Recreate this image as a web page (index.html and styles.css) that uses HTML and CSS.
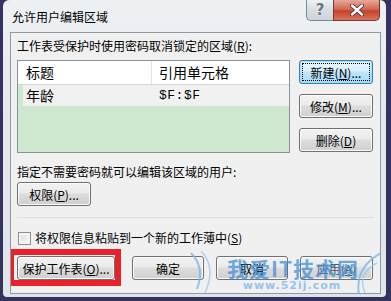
FILE: index.html
```html
<!DOCTYPE html>
<html lang="zh-CN">
<head>
  <meta charset="UTF-8" />
  <meta name="viewport" content="width=device-width, initial-scale=1.0" />
  <title>允许用户编辑区域</title>
  <link rel="stylesheet" href="styles.css">
</head>
<body>
  <div class="window">
    <div class="titlebar">
      <span class="title">允许用户编辑区域</span>
      <div class="caption-buttons">
        <span class="cap-help">?</span>
        <span class="cap-close">
          <svg width="16" height="12" viewBox="0 0 16 12">
            <path d="M3 1.5 L13 10.5 M13 1.5 L3 10.5" stroke="#3b2a2a" stroke-width="4" stroke-linecap="round" />
            <path d="M3 1.5 L13 10.5 M13 1.5 L3 10.5" stroke="#fff" stroke-width="2.4" stroke-linecap="round" />
          </svg>
        </span>
      </div>
    </div>

    <div class="client">
      <p class="label">工作表受保护时使用密码取消锁定的区域(<u>R</u>):</p>

      <div class="ranges">
        <div class="list">
          <div class="list-head">
            <span class="col-title">标题</span>
            <span class="col-ref">引用单元格</span>
          </div>
          <div class="list-row">
            <span class="col-title">年龄</span>
            <span class="col-ref mono">$F:$F</span>
          </div>
        </div>
        <div class="side-buttons">
          <button class="btn focused"><span class="focus-ring">新建(<u>N</u>)...</span></button>
          <button class="btn">修改(<u>M</u>)...</button>
          <button class="btn">删除(<u>D</u>)</button>
        </div>
      </div>

      <p class="label users">指定不需要密码就可以编辑该区域的用户:</p>
      <button class="btn perm">权限(<u>P</u>)...</button>

      <div class="separator"></div>

      <label class="check-row">
        <span class="checkbox"></span>
        <span>将权限信息粘贴到一个新的工作薄中(<u>S</u>)</span>
      </label>

      <div class="footer">
        <button class="btn protect">保护工作表(<u>O</u>)...</button>
        <button class="btn ok">确定</button>
        <button class="btn">取消</button>
        <button class="btn apply">应用(<u>A</u>)</button>
      </div>

      <div class="highlight"></div>

      <div class="watermark">
        <svg class="swoosh" width="200" height="50" viewBox="0 0 200 50">
          <path d="M2 4 C10 12 14 24 8 40" stroke="#7ab8ea" stroke-width="2" fill="none" />
          <path d="M12 2 C22 12 24 26 16 44" stroke="#9ccbf0" stroke-width="1.5" fill="none" />
          <path d="M196 2 C180 10 166 22 170 46" stroke="#7ab8ea" stroke-width="2" fill="none" />
          <path d="M188 14 C176 20 168 30 178 48" stroke="#9ccbf0" stroke-width="1.5" fill="none" />
        </svg>
        <div class="wm-name">我爱IT技术网</div>
        <div class="wm-url">www.52ij.com</div>
      </div>
    </div>
  </div>
</body>
</html>
```

FILE: styles.css
```css
body {
  margin: 0;
  background: #35325f;
  font-family: "Noto Sans CJK SC", sans-serif;
  font-size: 12px;
  color: #000;
}
u {
  text-decoration: underline;
  text-underline-offset: 1px;
}
.window {
  margin-left: 3px;
  width: 383px;
  height: 297px;
  box-sizing: border-box;
  background: linear-gradient(to bottom, #eef1f4, #e3e8ed 40%, #dfe6ea);
  border-radius: 6px 6px 4px 4px;
}
.titlebar {
  height: 32px;
  display: flex;
  align-items: flex-start;
  justify-content: space-between;
}
.title {
  margin: 8px 0 0 9px;
  line-height: 18px;
  font-size: 12px;
  color: #000;
}
.caption-buttons {
  display: flex;
  margin-right: 6px;
}
.cap-help {
  width: 27px;
  height: 21px;
  box-sizing: border-box;
  border: 1px solid #7b8696;
  border-top: none;
  border-right: none;
  border-radius: 0 0 0 5px;
  background: linear-gradient(#eef1f4, #d8dde3 50%, #cdd4db);
  color: #6a7482;
  font: bold 15px "DejaVu Sans", sans-serif;
  line-height: 20px;
  text-align: center;
  text-shadow: 0 0 2px #fff;
}
.cap-close {
  width: 47px;
  height: 21px;
  box-sizing: border-box;
  border: 1px solid #7a3a32;
  border-top: none;
  border-radius: 0 0 5px 0;
  background: linear-gradient(#e6a899, #d46a55 45%, #c7412c 55%, #d9755c);
  display: flex;
  align-items: center;
  justify-content: center;
}
.client {
  position: relative;
  margin-left: 7px;
  width: 371px;
  height: 262px;
  box-sizing: border-box;
  border: 1px solid #8e99a5;
  background: #f0f0f0;
  padding: 5px 7px 0 6px;
  overflow: hidden;
}
.label {
  margin: 0;
  line-height: 16px;
}
.ranges {
  display: flex;
  gap: 9px;
  margin-top: 6px;
}
.list {
  width: 273px;
  height: 93px;
  box-sizing: border-box;
  border: 1px solid #8a9099;
  background: #cde8cf;
  font-size: 14px;
}
.list-head {
  display: flex;
  height: 23px;
  background: #fff;
  border-bottom: 1px solid #d5d5d5;
  line-height: 22px;
}
.list-row {
  display: flex;
  height: 21px;
  margin-left: 5px;
  background: #f1f1f1;
  line-height: 21px;
}
.col-title {
  width: 134px;
  padding-left: 8px;
  box-sizing: border-box;
}
.list-head .col-title {
  border-right: 1px solid #e2e2e2;
}
.list-row .col-title {
  width: 129px;
  padding-left: 3px;
}
.col-ref {
  padding-left: 7px;
}
.mono {
  font-family: "Liberation Mono", monospace;
  font-size: 13px;
  letter-spacing: 0.5px;
}
.side-buttons {
  display: flex;
  flex-direction: column;
  gap: 10px;
}
.btn {
  width: 74px;
  height: 24px;
  padding: 0;
  border: 1px solid #707070;
  border-radius: 3px;
  background: linear-gradient(#f2f2f2, #ebebeb 45%, #dddddd 50%, #cfcfcf);
  box-shadow: inset 0 0 0 1px #fbfbfb;
  font-family: "Noto Sans CJK SC", sans-serif;
  font-size: 12px;
  color: #000;
  display: flex;
  align-items: center;
  justify-content: center;
}
.btn.focused {
  border-color: #3c7fb1;
  box-shadow: inset 0 0 0 1px #9fdcf7;
  background: linear-gradient(#eaf6fd, #d9f0fc 45%, #bee6fd 50%, #a7d9f5);
}
.focus-ring {
  flex: 1;
  align-self: stretch;
  margin: 2px;
  border: 1px dotted #000;
  display: flex;
  align-items: center;
  justify-content: center;
}
.users {
  margin-top: 11px;
}
.perm {
  margin-top: 2px;
}
.separator {
  height: 1px;
  width: 357px;
  margin-top: 11px;
  background: #d5dfe5;
}
.check-row {
  display: flex;
  align-items: center;
  gap: 4px;
  height: 16px;
  margin-top: 12px;
  margin-left: 1px;
  line-height: 16px;
}
.checkbox {
  width: 13px;
  height: 13px;
  box-sizing: border-box;
  border: 1px solid #8f8f8f;
  background: linear-gradient(135deg, #dcdcdc, #fafafa);
  box-shadow: inset 0 0 0 2px #f4f4f4;
}
.footer {
  display: flex;
  gap: 12px;
  margin-top: 10px;
}
.footer .btn {
  width: 72px;
}
.footer .protect {
  width: 98px;
}
.footer .ok {
  margin-left: 5px;
}
.footer .apply {
  width: 73px;
  color: #555;
}
.highlight {
  position: absolute;
  left: -3px;
  top: 216px;
  width: 113px;
  height: 37px;
  box-sizing: border-box;
  border: 6px solid #e8212b;
}
.watermark {
  position: absolute;
  left: 178px;
  top: 216px;
  width: 200px;
  height: 50px;
  text-align: center;
  pointer-events: none;
}
.swoosh {
  position: absolute;
  left: 0;
  top: 0;
  opacity: 0.8;
}
.wm-name {
  margin-top: 7px;
  margin-left: 8px;
  font-size: 21px;
  font-weight: bold;
  line-height: 24px;
  color: rgba(58, 140, 215, 0.72);
  letter-spacing: 1px;
}
.wm-url {
  margin-left: 6px;
  font-family: "DejaVu Sans", sans-serif;
  font-size: 11px;
  font-weight: bold;
  line-height: 12px;
  color: rgba(90, 165, 230, 0.6);
  letter-spacing: 1px;
}
```
